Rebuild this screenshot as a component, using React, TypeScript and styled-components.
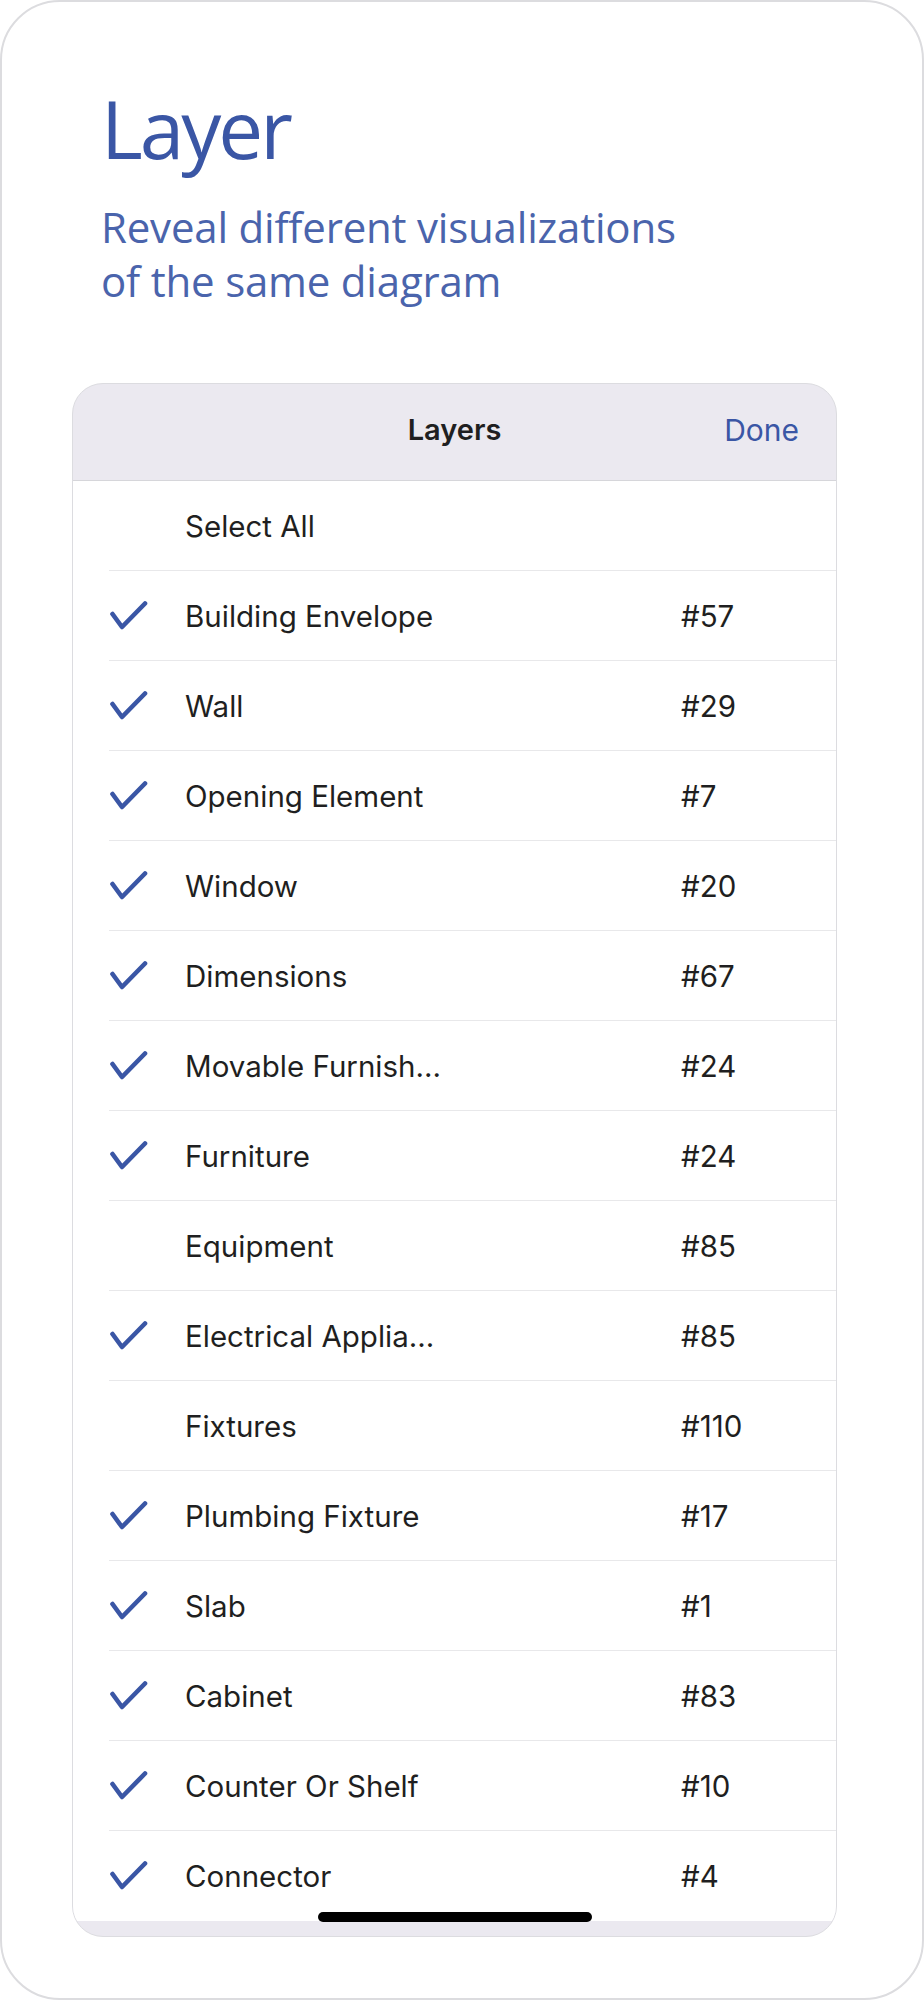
import styled, { createGlobalStyle } from "styled-components";

const GlobalStyle = createGlobalStyle`
	html, body {
		margin: 0;
		padding: 0;
		background: #ffffff;
	}
	* {
		box-sizing: border-box;
	}
`;

const Frame = styled.div`
	width: 924px;
	height: 2000px;
	border: 2px solid #dcdcdf;
	border-radius: 60px;
	background: #ffffff;
	padding-top: 78px;
	display: flex;
	flex-direction: column;
`;

const Intro = styled.div`
	padding-left: 99px;
	color: #3a56a5;
	font-family: "Open Sans", "Noto Sans", sans-serif;
`;

const Title = styled.h1`
	margin: 0;
	font-size: 80px;
	font-weight: 400;
	line-height: 96px;
	letter-spacing: -3px;
`;

const Subtitle = styled.p`
	margin: 24px 0 0;
	font-size: 42px;
	line-height: 54px;
	color: #4a64ac;
	letter-spacing: -0.2px;
`;

const Panel = styled.div`
	position: relative;
	margin: 75px 0 0 70px;
	width: 765px;
	border: 1.5px solid #dcdce0;
	border-radius: 31px;
	background: #ebe9f0;
	overflow: hidden;
	padding-bottom: 15px;
	font-family: "Inter", "Roboto", sans-serif;
`;

const PanelHeader = styled.div`
	height: 97px;
	display: flex;
	align-items: center;
	justify-content: center;
	position: relative;
	border-bottom: 1px solid #d6d6da;
`;

const HeaderTitle = styled.span`
	font-size: 29px;
	font-weight: 600;
	color: #1f1f21;
	padding-bottom: 5px;
`;

const DoneButton = styled.span`
	position: absolute;
	right: 37px;
	top: 50%;
	transform: translateY(-50%);
	font-size: 30px;
	color: #3a56a5;
	padding-bottom: 5px;
`;

const List = styled.ul`
	margin: 0;
	padding: 0;
	list-style: none;
	background: #ffffff;
`;

const Row = styled.li`
	margin-left: 36px;
	height: 90px;
	display: grid;
	grid-template-columns: 76px 496px 1fr;
	align-items: center;
	border-bottom: 1px solid #e8e8ea;
	font-size: 29.5px;
	color: #1f1f21;
	&:last-child {
		border-bottom: none;
	}
`;

const CheckCell = styled.span`
	display: flex;
	align-items: center;
	height: 100%;
	padding-left: 1px;
`;

const Name = styled.span`
	white-space: nowrap;
`;

const Count = styled.span`
	white-space: nowrap;
`;

const HomeIndicator = styled.div`
	position: absolute;
	left: 50%;
	bottom: 14px;
	width: 274px;
	height: 10px;
	margin-left: -137px;
	border-radius: 5px;
	background: #000000;
`;

function Check() {
	return (
		<svg width="38" height="30" viewBox="0 0 38 30">
			<polyline
				points="2.5,13 12,26 35,2.5"
				fill="none"
				stroke="#3a56a5"
				strokeWidth="4.6"
				strokeLinecap="round"
				strokeLinejoin="round"
			/>
		</svg>
	);
}

interface ILayer {
	name: string;
	count?: string;
	checked: boolean;
}

const layers: ILayer[] = [
	{ name: "Select All", checked: false },
	{ name: "Building Envelope", count: "#57", checked: true },
	{ name: "Wall", count: "#29", checked: true },
	{ name: "Opening Element", count: "#7", checked: true },
	{ name: "Window", count: "#20", checked: true },
	{ name: "Dimensions", count: "#67", checked: true },
	{ name: "Movable Furnish...", count: "#24", checked: true },
	{ name: "Furniture", count: "#24", checked: true },
	{ name: "Equipment", count: "#85", checked: false },
	{ name: "Electrical Applia...", count: "#85", checked: true },
	{ name: "Fixtures", count: "#110", checked: false },
	{ name: "Plumbing Fixture", count: "#17", checked: true },
	{ name: "Slab", count: "#1", checked: true },
	{ name: "Cabinet", count: "#83", checked: true },
	{ name: "Counter Or Shelf", count: "#10", checked: true },
	{ name: "Connector", count: "#4", checked: true },
];

function App() {
	return (
		<>
			<GlobalStyle />
			<Frame>
				<Intro>
					<Title>Layer</Title>
					<Subtitle>
						Reveal different visualizations
						<br />
						of the same diagram
					</Subtitle>
				</Intro>
				<Panel>
					<PanelHeader>
						<HeaderTitle>Layers</HeaderTitle>
						<DoneButton>Done</DoneButton>
					</PanelHeader>
					<List>
						{layers.map((layer) => (
							<Row key={layer.name}>
								<CheckCell>{layer.checked && <Check />}</CheckCell>
								<Name>{layer.name}</Name>
								<Count>{layer.count}</Count>
							</Row>
						))}
					</List>
					<HomeIndicator />
				</Panel>
			</Frame>
		</>
	);
}

export default App;
